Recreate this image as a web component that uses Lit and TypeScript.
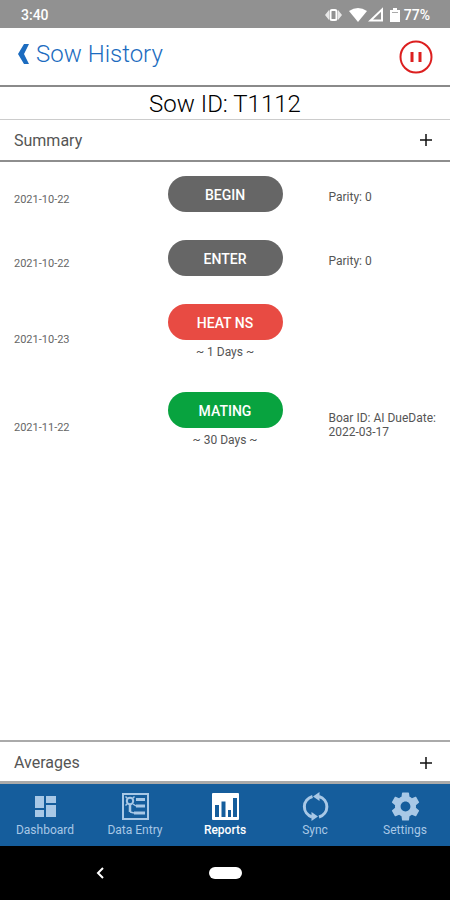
import { LitElement, html, css, svg, nothing } from "lit";
import { customElement, state } from "lit/decorators.js";
import { classMap } from "lit/directives/class-map.js";

interface SowEvent {
  date: string;
  label: string;
  tone: "grey" | "red" | "green";
  days?: string;
  note: string;
}

const EVENTS: SowEvent[] = [
  { date: "2021-10-22", label: "BEGIN", tone: "grey", note: "Parity: 0" },
  { date: "2021-10-22", label: "ENTER", tone: "grey", note: "Parity: 0" },
  { date: "2021-10-23", label: "HEAT NS", tone: "red", days: "~ 1 Days ~", note: "" },
  { date: "2021-11-22", label: "MATING", tone: "green", days: "~ 30 Days ~", note: "Boar ID: AI DueDate: 2022-03-17" },
];

const TABS = [
  {
    name: "Dashboard",
    icon: svg`<path fill="currentColor" d="M4 4h9v12H4zM15 4h10v7H15zM4 18h9v7H4zM15 13h10v12H15z"/>`,
  },
  {
    name: "Data Entry",
    icon: svg`<g fill="none" stroke="currentColor"><rect x="2" y="2" width="25" height="25" stroke-width="2"/><circle cx="9" cy="9" r="3.200" stroke-width="2"/><path d="M9 12v8" stroke-width="2.500"/><path d="M15 7.500h9M15 14h9M13 21h11" stroke-width="3"/><path d="M4.500 4.500l2 2M13.500 4.500l-2 2M4.500 13.500l2-2M12 12l3 2M9 20l4 1" stroke-width="1.500"/></g>`,
  },
  {
    name: "Reports",
    icon: svg`<path fill="currentColor" fill-rule="evenodd" d="M2 1h25a1 1 0 0 1 1 1v25a1 1 0 0 1-1 1H2a1 1 0 0 1-1-1V2a1 1 0 0 1 1-1zM4 13v12h4V13zM10.500 9.500v15.500h4V9.500zM17 18v7h3v-7zM22 6v19h4V6z"/>`,
  },
  {
    name: "Sync",
    icon: svg`<g fill="none" stroke="currentColor" stroke-width="3"><path d="M11.500 4.500A11.500 10.800 0 0 0 11 25"/><path d="M18 25A11.500 10.800 0 0 0 18 4.500"/></g><path fill="currentColor" d="M18.500 0v9L12 4.500zM10.500 20v9l6.500-4.500z"/>`,
  },
  {
    name: "Settings",
    icon: svg`<path fill="currentColor" transform="translate(-2.300 -2.300) scale(1.400)" d="M19.430 12.980c.04-.32.07-.64.07-.98s-.03-.66-.07-.98l2.110-1.650c.19-.15.24-.42.12-.64l-2-3.460c-.12-.22-.39-.3-.61-.22l-2.490 1c-.52-.4-1.080-.73-1.690-.98l-.38-2.650C14.460 2.180 14.250 2 14 2h-4c-.25 0-.46.18-.49.42l-.38 2.650c-.61.25-1.170.59-1.690.98l-2.490-1c-.23-.09-.49 0-.61.22l-2 3.460c-.13.22-.07.49.12.64l2.110 1.650c-.04.32-.07.65-.07.98s.03.66.07.98l-2.110 1.650c-.19.15-.24.42-.12.64l2 3.460c.12.22.39.3.61.22l2.490-1c.52.4 1.080.73 1.690.98l.38 2.650c.03.24.24.42.49.42h4c.25 0 .46-.18.49-.42l.38-2.650c.61-.25 1.170-.59 1.690-.98l2.490 1c.23.09.49 0 .61-.22l2-3.460c.12-.22.07-.49-.12-.64l-2.110-1.650zM12 15.500c-1.930 0-3.500-1.570-3.500-3.500s1.570-3.500 3.500-3.500 3.500 1.570 3.500 3.500-1.570 3.500-3.500 3.500z"/>`,
  },
];

@customElement("app-root")
export class AppRoot extends LitElement {
  @state() private tab = "Reports";

  static styles = css`
    :host {
      display: flex;
      flex-direction: column;
      min-height: 100vh;
      background: #fff;
      color: #555;
      font-family: Roboto, "Liberation Sans", sans-serif;
    }
    * { box-sizing: border-box; }
    button {
      font: inherit;
      color: inherit;
      border: 0;
      margin: 0;
      padding: 0;
      background: none;
      cursor: pointer;
    }
    svg { display: block; }
    h1, p, ul { margin: 0; padding: 0; font-weight: 400; }
    .status {
      display: flex;
      align-items: center;
      height: 28px;
      padding: 2px 20px 0 21px;
      background: #919191;
      color: #fff;
      font-size: 14px;
      font-weight: 500;
    }
    .status-icons { display: flex; align-items: center; gap: 3px; margin-left: auto; }
    .header {
      display: flex;
      align-items: center;
      justify-content: space-between;
      height: 59px;
      padding: 0 17px;
      border-bottom: 2px solid #8a8a8a;
    }
    .back {
      display: flex;
      align-items: center;
      gap: 6px;
      padding-bottom: 6px;
      color: #1c6cc0;
      font-size: 24px;
      font-weight: 300;
      line-height: 32px;
    }
    .title {
      height: 33px;
      border-bottom: 1px solid #ccc;
      color: #000;
      font-size: 24px;
      font-weight: 300;
      line-height: 34px;
      text-align: center;
    }
    .fold {
      display: flex;
      align-items: center;
      justify-content: space-between;
      width: 100%;
      height: 42px;
      padding: 0 17px 0 14px;
      border-bottom: 2px solid #8e8e8e;
      font-size: 16px;
      color: #555;
    }
    .averages { height: 44px; padding-top: 2px; border-top: 2px solid #aaa; border-bottom: 3px solid #aaa; }
    .plus { color: #111; }
    .events {
      flex: 1;
      display: flex;
      flex-direction: column;
      gap: 28px;
      padding: 14px 0;
      list-style: none;
    }
    .event {
      display: grid;
      grid-template-columns: 1fr 115px 1fr;
      align-items: center;
      padding: 0 14px;
    }
    .date { font-size: 11px; padding-top: 10px; color: #666; }
    .note { font-size: 12px; line-height: 14px; padding-top: 6px; margin-left: 46px; margin-right: -8px; }
    .pill {
      display: block;
      width: 100%;
      height: 36px;
      padding-top: 2px;
      border-radius: 18px;
      color: #fff;
      font-size: 14px;
      font-weight: 500;
    }
    .grey { background: #666; }
    .red { background: #e84b43; }
    .green { background: #08a33f; }
    .days { font-size: 12px; line-height: 24px; text-align: center; }
    .tabs { display: grid; grid-template-columns: repeat(5, 1fr); height: 62px; background: #155d9c; color: #a8c8e6; }
    .tab { display: flex; flex-direction: column; align-items: center; padding-top: 8px; gap: 1px; font-size: 12px; line-height: 16px; }
    .tab.active { color: #fff; font-weight: 500; }
    .system { display: grid; grid-template-columns: 1fr 33px 1fr; align-items: center; height: 54px; background: #000; color: #fff; }
    .sys-back { justify-self: center; margin-left: -8px; }
    .home { height: 12px; border-radius: 6px; background: #fff; }
  `;

  private plus() {
    return html`<svg class="plus" width="14" height="14" viewBox="0 0 14 14" aria-hidden="true"><path d="M7 1v12M1 7h12" stroke="currentColor" stroke-width="1.500" fill="none"/></svg>`;
  }

  render() {
    return html`
      <div class="status">
        <span>3:40</span>
        <div class="status-icons">
          <svg width="76" height="16" viewBox="0 0 76 16" aria-hidden="true">
            <path d="M4 3v10L0 8zM13 3v10l4-5z" fill="#e8e8e8"/>
            <rect x="5.500" y="3" width="6" height="10" rx="1.500" fill="none" stroke="#fff" stroke-width="2"/>
            <path d="M24 4q9-6 18 0l-9 11z" fill="#fff"/>
            <path d="M57 2.500v11H45.500z" fill="none" stroke="#fff" stroke-width="2"/>
            <path d="M65 3h3V1h4v2h3v12H65z" fill="#fff"/>
            <path d="M67 5.500h6" stroke="#aaa" stroke-width="1"/>
          </svg>
          <span>77%</span>
        </div>
      </div>
      <header class="header">
        <button class="back">
          <svg width="13" height="22" viewBox="0 0 13 22" aria-hidden="true"><path d="M7 1h5L7 11l5 10H7L1 11z" fill="currentColor"/></svg>
          <span>Sow History</span>
        </button>
        <button aria-label="Pause">
          <svg width="34" height="34" viewBox="0 0 34 34" aria-hidden="true"><circle cx="17" cy="17" r="15.500" fill="none" stroke="#dc1f1f" stroke-width="2"/><path d="M13 12v10M21 12v10" stroke="#dc1f1f" stroke-width="3"/></svg>
        </button>
      </header>
      <h1 class="title">Sow ID: T1112</h1>
      <button class="fold"><span>Summary</span>${this.plus()}</button>
      <ul class="events">
        ${EVENTS.map(
          (e) => html`<li class="event">
            <span class="date">${e.date}</span>
            <div>
              <button class=${classMap({ pill: true, [e.tone]: true })}>${e.label}</button>
              ${e.days ? html`<p class="days">${e.days}</p>` : nothing}
            </div>
            <p class="note">${e.note}</p>
          </li>`
        )}
      </ul>
      <button class="fold averages"><span>Averages</span>${this.plus()}</button>
      <nav class="tabs">
        ${TABS.map(
          (t) => html`<button class=${classMap({ tab: true, active: t.name === this.tab })} @click=${() => (this.tab = t.name)}>
            <svg width="29" height="29" viewBox="0 0 29 29" aria-hidden="true">${t.icon}</svg>
            <span>${t.name}</span>
          </button>`
        )}
      </nav>
      <div class="system">
        <button class="sys-back" aria-label="Back">
          <svg width="10" height="14" viewBox="0 0 10 14" aria-hidden="true"><path d="M8 2L3 7l5 5" fill="none" stroke="currentColor" stroke-width="2"/></svg>
        </button>
        <button class="home" aria-label="Home"></button>
      </div>
    `;
  }
}
